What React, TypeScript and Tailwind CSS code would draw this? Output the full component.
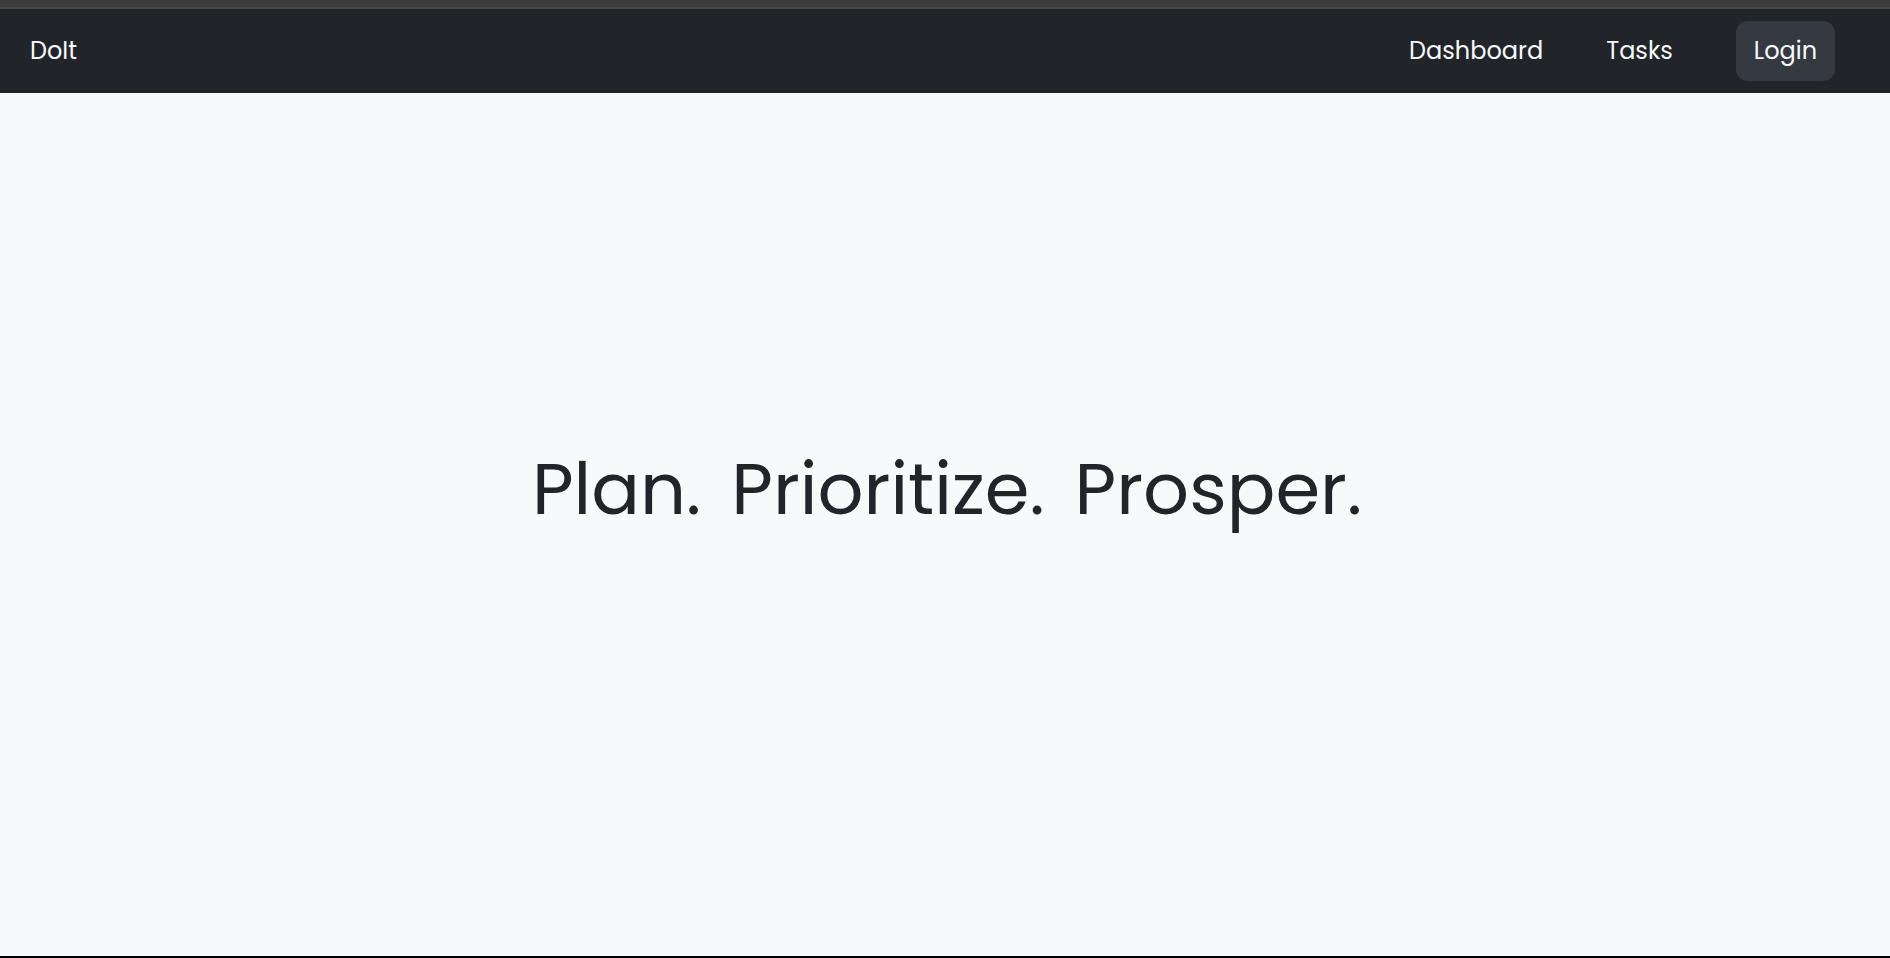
const slogan = ["Plan.", "Prioritize.", "Prosper."];

function NavBar() {
  return (
    <header className="bg-[#212529] text-[#f8f9fa]">
      <nav aria-label="Main" className="flex items-center justify-between py-3 pr-[55px] pl-[30px] text-2xl leading-9">
        <a href="#home">DoIt</a>
        <div className="flex items-center gap-[63px]">
          <a href="#dashboard">Dashboard</a>
          <a href="#tasks">Tasks</a>
          <button type="button" className="rounded-xl bg-[#343a40] px-[18px] py-3">
            Login
          </button>
        </div>
      </nav>
    </header>
  );
}

export default function App() {
  return (
    <div className="flex min-h-screen flex-col border-b-2 border-black bg-[#f8f9fb] font-['Poppins','Inter',sans-serif]">
      <div className="h-[9px] border-b-2 border-[#474747] bg-[#3c3c3c]" />
      <NavBar />
      <main className="flex grow items-center justify-center pb-[72px] pl-1">
        <h1 className="flex gap-[30px] text-7xl text-[#212529]">
          {slogan.map((word) => (
            <span key={word}>{word}</span>
          ))}
        </h1>
      </main>
    </div>
  );
}
